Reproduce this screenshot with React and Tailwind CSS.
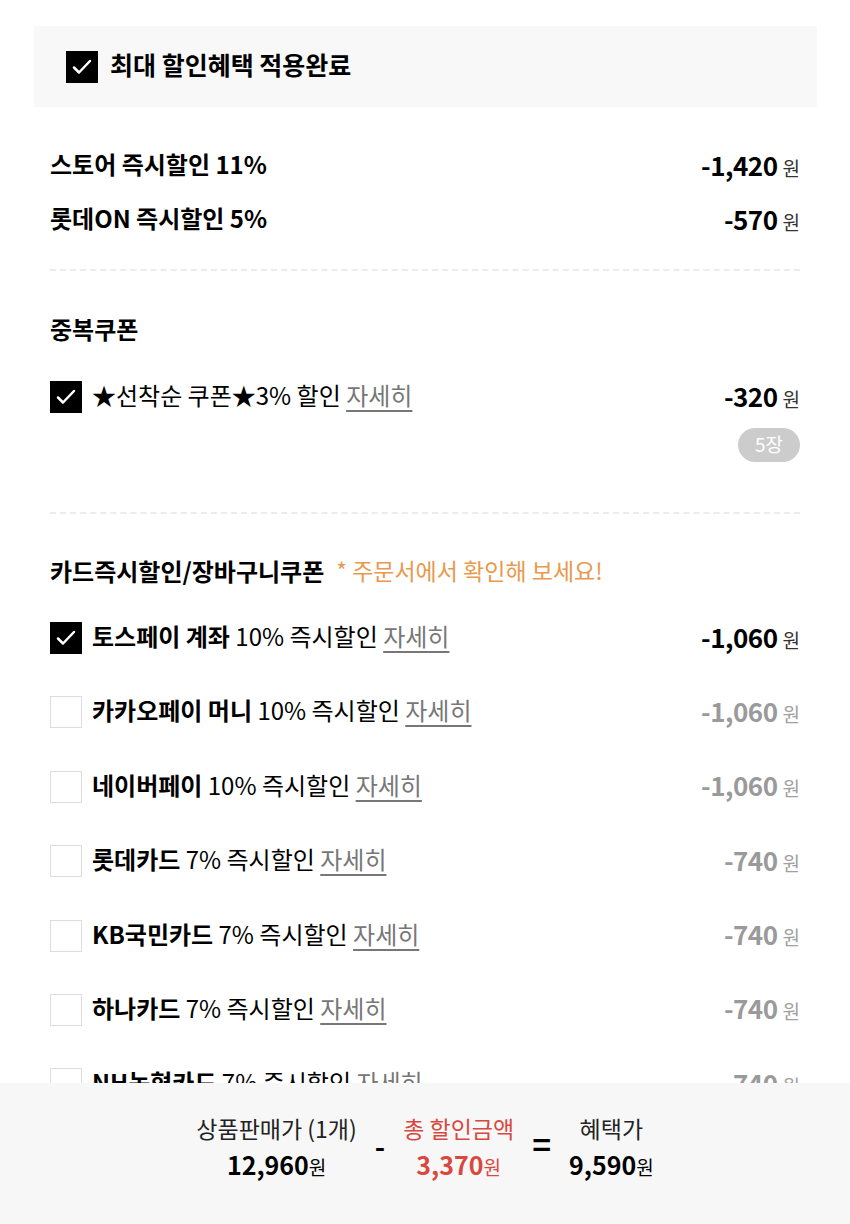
import React from "react";

const F = { fontFamily: '"Noto Sans CJK KR", "Noto Sans", sans-serif' };

function Check({ on }) {
  if (on) {
    return (
      <div className="w-[32px] h-[32px] bg-black flex items-center justify-center shrink-0">
        <svg width="24" height="24" viewBox="0 0 24 24" fill="none" stroke="white" strokeWidth="2.5" strokeLinecap="round" strokeLinejoin="round">
          <path d="M4 12.5l5 5L20 6" />
        </svg>
      </div>
    );
  }
  return <div className="w-[32px] h-[32px] bg-white border border-[#dddddd] shrink-0" />;
}

function Amount({ v, gray }) {
  return (
    <div className={"flex items-baseline gap-[5px] pb-[4px] " + (gray ? "text-[#9a9a9a]" : "text-black")}>
      <span className="text-[26px] font-bold tracking-[-0.5px]">{v}</span>
      <span className={"text-[19px] " + (gray ? "text-[#a0a0a0]" : "text-[#333333]")}>원</span>
    </div>
  );
}

const cards = [
  { name: "토스페이 계좌", rate: "10%", amt: "-1,060", on: true },
  { name: "카카오페이 머니", rate: "10%", amt: "-1,060" },
  { name: "네이버페이", rate: "10%", amt: "-1,060" },
  { name: "롯데카드", rate: "7%", amt: "-740" },
  { name: "KB국민카드", rate: "7%", amt: "-740" },
  { name: "하나카드", rate: "7%", amt: "-740" },
  { name: "NH농협카드", rate: "7%", amt: "-740" },
];

export default function App() {
  return (
    <div style={F} className="relative w-[850px] h-[1224px] overflow-hidden bg-white text-black">
      <div className="pt-[26px] px-[34px] pr-[33px]">
        <div className="h-[81px] bg-[#f8f8f8] flex items-center pl-[32px] gap-[12px]">
          <Check on />
          <span className="text-[25px] font-bold pb-[3px]">최대 할인혜택 적용완료</span>
        </div>
      </div>

      <div className="px-[50px]">
        <div className="mt-[32px] flex flex-col">
          <div className="h-[54px] flex items-center justify-between">
            <span className="text-[24px] font-bold pb-[4px]">스토어 즉시할인 11%</span>
            <Amount v="-1,420" />
          </div>
          <div className="h-[54px] flex items-center justify-between">
            <span className="text-[24px] font-bold pb-[4px]">롯데ON 즉시할인 5%</span>
            <Amount v="-570" />
          </div>
        </div>

        <div className="mt-[22px] border-t-2 border-dashed border-[#ececec]" />

        <div className="mt-[44px] h-[30px] flex items-center">
          <span className="text-[24px] font-bold pb-[3px]">중복쿠폰</span>
        </div>

        <div className="mt-[32px] h-[40px] flex items-center justify-between">
          <div className="flex items-center gap-[10px]">
            <Check on />
            <span className="text-[24px] pb-[4px]">
              ★선착순 쿠폰★3% 할인{" "}
              <span className="text-[#777777] underline underline-offset-[5px] decoration-[1.5px]">자세히</span>
            </span>
          </div>
          <Amount v="-320" />
        </div>

        <div className="mt-[11px] flex justify-end">
          <div className="h-[34px] w-[62px] rounded-full bg-[#cccccc] text-white text-[19px] flex items-center justify-center pb-[2px]">5장</div>
        </div>

        <div className="mt-[50px] border-t-2 border-dashed border-[#ececec]" />

        <div className="mt-[43px] h-[30px] flex items-center gap-[12px]">
          <span className="text-[24px] font-bold pb-[3px]">카드즉시할인/장바구니쿠폰</span>
          <span className="text-[23px] text-[#e8994e] pb-[3px]">* 주문서에서 확인해 보세요!</span>
        </div>

        <div className="mt-[31px] flex flex-col gap-[34.4px]">
          {cards.map((c) => (
            <div key={c.name} className="h-[40px] flex items-center justify-between">
              <div className="flex items-center gap-[10px]">
                <Check on={c.on} />
                <span className="text-[24px] pb-[4px]">
                  <span className="font-bold">{c.name}</span> {c.rate} 즉시할인{" "}
                  <span className="text-[#777777] underline underline-offset-[5px] decoration-[1.5px]">자세히</span>
                </span>
              </div>
              <Amount v={c.amt} gray={!c.on} />
            </div>
          ))}
        </div>
      </div>

      <div className="absolute left-0 right-0 bottom-0 h-[141px] bg-[#f7f7f7] flex justify-center items-start pt-[26px] gap-[18px]">
        <div className="flex flex-col items-center">
          <span className="text-[23px] leading-[38px] text-[#222222]">상품판매가 (1개)</span>
          <span className="leading-[34px]"><span className="text-[25px] font-bold">12,960</span><span className="text-[19px]">원</span></span>
        </div>
        <span className="text-[28px] font-bold mt-[16px]">-</span>
        <div className="flex flex-col items-center">
          <span className="text-[23px] leading-[38px] text-[#d9483f]">총 할인금액</span>
          <span className="leading-[34px] text-[#d9483f]"><span className="text-[25px] font-bold">3,370</span><span className="text-[19px]">원</span></span>
        </div>
        <span className="text-[32px] font-bold mt-[10px]">=</span>
        <div className="flex flex-col items-center">
          <span className="text-[23px] leading-[38px] text-[#222222]">혜택가</span>
          <span className="leading-[34px]"><span className="text-[25px] font-bold">9,590</span><span className="text-[19px]">원</span></span>
        </div>
      </div>
    </div>
  );
}
